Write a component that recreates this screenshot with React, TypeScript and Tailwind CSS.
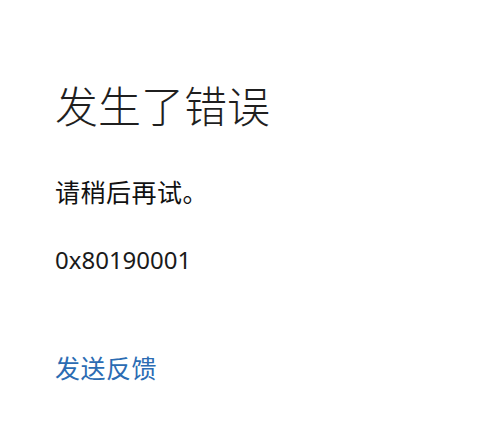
export default function App() {
  return (
    <div
      className="flex min-h-[427px] w-full flex-col items-start bg-white pl-[55px] pt-[85px]"
      style={{ fontFamily: '"Noto Sans", "Noto Sans CJK SC", sans-serif' }}
    >
      <h1 className="text-[43px] font-light leading-[43px] text-[#1f1f1f]">发生了错误</h1>
      <p className="mt-[52px] text-[25px] leading-[25px] tracking-[0.5px] text-[#111111]">请稍后再试。</p>
      <p className="mt-[43px] text-[24px] leading-[24px] text-[#1a1a1a]">0x80190001</p>
      <a href="#" className="mt-[84px] text-[25px] leading-[25px] tracking-[0.5px] text-[#2b6cb3]">
        发送反馈
      </a>
    </div>
  );
}
